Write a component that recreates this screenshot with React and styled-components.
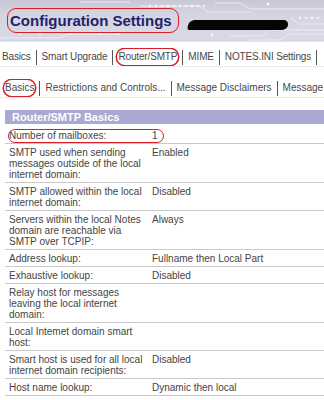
import styled, { createGlobalStyle } from 'styled-components';

const Global = createGlobalStyle`
  html, body {
    margin: 0;
    padding: 0;
    background: #ffffff;
  }
  body {
    font-family: "Liberation Sans", Arial, sans-serif;
    color: #444;
  }
`;

const Page = styled.div`
  width: 324px;
  height: 400px;
  overflow: hidden;
  background: #fff;
`;

const Header = styled.header`
  display: grid;
  height: 41px;
  background: linear-gradient(180deg, #c8c8d5 0%, #d5d5e2 35%, #d9d9e6 100%);
  border-bottom: 1px solid #e2e2ea;
  overflow: hidden;

  & > * {
    grid-area: 1 / 1;
  }
`;

const Pattern = styled.svg`
  width: 324px;
  height: 41px;
`;

const TitleRow = styled.div`
  display: flex;
  align-items: center;
  padding-left: 7px;
  gap: 9px;
`;

const Title = styled.h1`
  margin: 0;
  font-size: 15px;
  line-height: 17px;
  font-weight: bold;
  color: #22226a;
  border: 1.5px solid #dc1c24;
  border-radius: 9px;
  padding: 3px 6px 3px 2px;
  white-space: nowrap;
`;

const Redacted = styled.span`
  display: block;
  width: 100px;
  height: 10px;
  margin-top: 8px;
  background: #050505;
  border-radius: 6px 5px 5px 2px;
  transform: skewX(-8deg);
`;

const TabBar = styled.nav`
  display: flex;
  white-space: nowrap;
  overflow: hidden;
  height: 18px;
  margin-top: ${p => p.$top}px;
  padding-left: ${p => p.$indent}px;
  font-size: 10px;
  line-height: 18px;
  color: #484848;
  letter-spacing: ${p => p.$tight ? '-0.15px' : '0'};
  border-bottom: 1px solid #ececec;
`;

const Tab = styled.span`
  display: flex;
  align-items: center;
  padding: 0 5px;
  flex-shrink: 0;

  &:first-child {
    padding-left: 0;
  }

  &::after {
    content: '';
    display: block;
    width: 1px;
    height: 15px;
    margin-left: 5px;
    margin-right: -5px;
    background: #555;
  }
`;

const Circled = styled.span`
  display: inline-block;
  line-height: 12px;
  padding: 2px 1px;
  margin: -2px -1px;
  border-radius: 8px;
  box-shadow: 0 0 0 1.5px #dc1c24;
`;

const Section = styled.section`
  margin: 12px 0 0 5px;
`;

const Band = styled.div`
  height: 14px;
  line-height: 14px;
  background: #a9a9d2;
  color: #fff;
  font-size: 11px;
  font-weight: bold;
  padding-left: 7px;
`;

const Rows = styled.div`
  margin-top: 3px;
`;

const Row = styled.div`
  position: relative;
  display: grid;
  grid-template-columns: 147px 1fr;
  font-size: 10px;
  line-height: 11px;
  color: #444;
  padding: 3px 0 2px;
  border-bottom: 1px solid #c9c9c9;

  ${p => p.$circled && `
    &::after {
      content: '';
      position: absolute;
      left: 3px;
      top: 2px;
      width: 154px;
      height: 12px;
      border: 1.5px solid #dc1c24;
      border-radius: 7px;
    }
  `}
`;

const Label = styled.div`
  padding: 0 8px 0 4px;
`;

const Value = styled.div``;

const topTabs = ['Basics', 'Smart Upgrade', 'Router/SMTP', 'MIME', 'NOTES.INI Settings'];
const subTabs = ['Basics', 'Restrictions and Controls...', 'Message Disclaimers', 'Message Tracking'];

const rows = [
  ['Number of mailboxes:', '1', true],
  ['SMTP used when sending messages outside of the local internet domain:', 'Enabled'],
  ['SMTP allowed within the local internet domain:', 'Disabled'],
  ['Servers within the local Notes domain are reachable via SMTP over TCPIP:', 'Always'],
  ['Address lookup:', 'Fullname then Local Part'],
  ['Exhaustive lookup:', 'Disabled'],
  ['Relay host for messages leaving the local internet domain:', ''],
  ['Local Intemet domain smart host:', ''],
  ['Smart host is used for all local internet domain recipients:', 'Disabled'],
  ['Host name lookup:', 'Dynamic then local'],
];

const CircuitLines = () => (
  <Pattern viewBox="0 0 324 41">
    <g stroke="#eceef8" strokeWidth="1" fill="none" opacity="0.9">
      <polyline points="140,6 200,6 208,12 250,12" />
      <polyline points="215,3 240,3 250,9 324,9" />
      <polyline points="230,36 262,36 270,30 324,30" />
      <polyline points="290,18 300,24 324,24" />
      <polyline points="250,40 280,40 290,34 324,34" />
      <polyline points="0,38 60,38 68,34 120,34" />
      <polyline points="80,2 130,2" />
    </g>
    <g fill="#f4f5fc">
      {[150, 156, 162, 168, 174, 180, 186, 192, 198, 204].map(x => (
        <circle key={x} cx={x} cy="6" r="1.2" />
      ))}
      {[300, 306, 312, 318].map(x => (
        <circle key={x} cx={x} cy="18" r="1.2" />
      ))}
      {[20, 40, 70, 100, 118].map(x => (
        <circle key={x} cx={x} cy="34" r="1" />
      ))}
      <circle cx="212" cy="35" r="1.4" />
      <circle cx="244" cy="28" r="1.4" />
      <circle cx="268" cy="4" r="1.4" />
    </g>
  </Pattern>
);

export default function App() {
  return (
    <Page>
      <Global />
      <Header>
        <CircuitLines />
        <TitleRow>
          <Title>Configuration Settings</Title>
          <Redacted />
        </TitleRow>
      </Header>

      <TabBar $top={6} $indent={2} $tight>
        {topTabs.map(t => (
          <Tab key={t}>{t === 'Router/SMTP' ? <Circled>{t}</Circled> : t}</Tab>
        ))}
      </TabBar>

      <TabBar $top={12} $indent={5}>
        {subTabs.map((t, i) => (
          <Tab key={t}>{i === 0 ? <Circled>{t}</Circled> : t}</Tab>
        ))}
      </TabBar>

      <Section>
        <Band>Router/SMTP Basics</Band>
        <Rows>
          {rows.map(([label, value, circled]) => (
            <Row key={label} $circled={circled}>
              <Label>{label}</Label>
              <Value>{value}</Value>
            </Row>
          ))}
        </Rows>
      </Section>
    </Page>
  );
}
